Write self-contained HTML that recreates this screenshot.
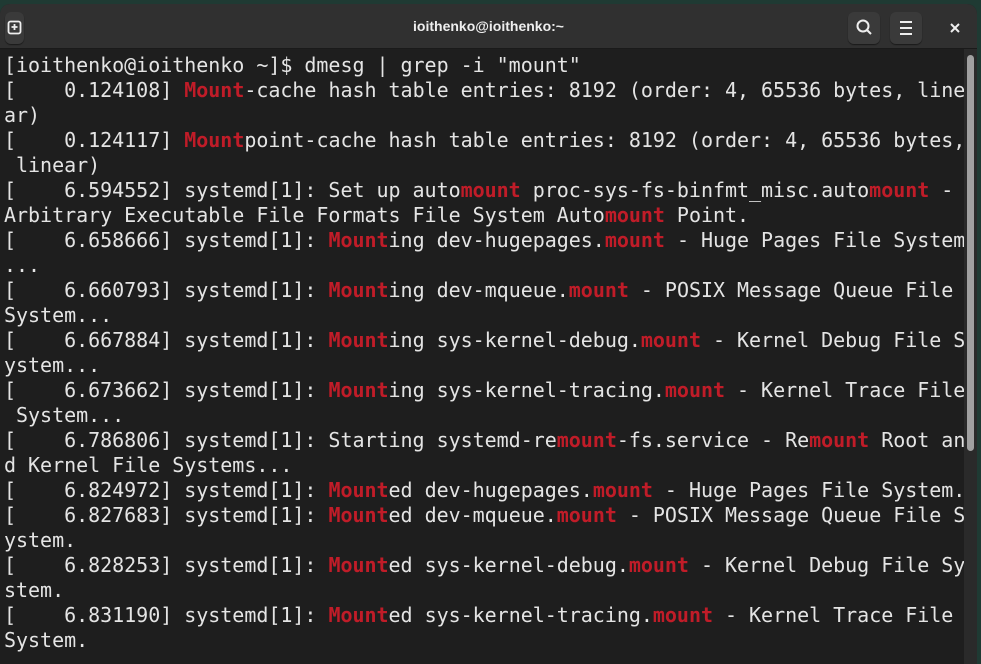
<html><head><style>
body{margin:0;width:981px;height:658px;background:#1f3a33;overflow:hidden;position:relative}
.win{position:absolute;left:0;top:4px;width:977px;height:660px;background:#1e1e1e;border-radius:10px 10px 0 0;overflow:hidden}
.hdr{height:44px;background:#303030;border-bottom:1px solid #1a1a1a;position:relative;font-family:"Liberation Sans",sans-serif}
.title{position:absolute;left:0;right:0;top:14px;text-align:center;color:#eee;font-size:14px;font-weight:bold}
.btn{position:absolute;top:8px;width:32px;height:32px;background:#3a3a3a;border-radius:6px;box-shadow:0 1px 1px #1a1a1a}
pre{position:absolute;left:4px;top:49px;margin:0;font-family:"DejaVu Sans Mono","Liberation Mono",monospace;font-size:20px;letter-spacing:-0.025px;line-height:25px;color:#e4e4e4}
b{color:#c01c28}
.tr{position:absolute;left:964px;top:45px;width:13px;height:620px;background:#2a2a2a}
.th{position:absolute;left:967px;top:51px;width:7px;height:396px;background:#a0a0a0;border-radius:4px}
</style></head><body><div class="win">
<div class="hdr">
<div class="btn" style="left:5px;width:19px"><svg width="19" height="32"><rect x="3.5" y="9.5" width="12" height="12" rx="2" fill="none" stroke="#eee" stroke-width="1.8"/><path d="M9.5 12v6M6.5 15h6" stroke="#eee" stroke-width="1.8"/></svg></div>
<div class="title">ioithenko@ioithenko:~</div>
<div class="btn" style="left:848px"><svg width="32" height="32"><circle cx="15" cy="14" r="5.5" fill="none" stroke="#eee" stroke-width="2"/><path d="M19 18l4 4" stroke="#eee" stroke-width="2"/></svg></div>
<div class="btn" style="left:890px"><svg width="32" height="32"><path d="M10 10h12M10 16h12M10 22h12" stroke="#eee" stroke-width="2"/></svg></div>
<svg style="position:absolute;left:948px;top:17px" width="14" height="14"><path d="M3 3l8 8M11 3l-8 8" stroke="#eee" stroke-width="2"/></svg>
</div>
<pre>[ioithenko@ioithenko ~]$ dmesg | grep -i "mount"
[    0.124108] <b>Mount</b>-cache hash table entries: 8192 (order: 4, 65536 bytes, line
ar)
[    0.124117] <b>Mount</b>point-cache hash table entries: 8192 (order: 4, 65536 bytes,
 linear)
[    6.594552] systemd[1]: Set up auto<b>mount</b> proc-sys-fs-binfmt_misc.auto<b>mount</b> -
Arbitrary Executable File Formats File System Auto<b>mount</b> Point.
[    6.658666] systemd[1]: <b>Mount</b>ing dev-hugepages.<b>mount</b> - Huge Pages File System
...
[    6.660793] systemd[1]: <b>Mount</b>ing dev-mqueue.<b>mount</b> - POSIX Message Queue File
System...
[    6.667884] systemd[1]: <b>Mount</b>ing sys-kernel-debug.<b>mount</b> - Kernel Debug File S
ystem...
[    6.673662] systemd[1]: <b>Mount</b>ing sys-kernel-tracing.<b>mount</b> - Kernel Trace File
 System...
[    6.786806] systemd[1]: Starting systemd-re<b>mount</b>-fs.service - Re<b>mount</b> Root an
d Kernel File Systems...
[    6.824972] systemd[1]: <b>Mount</b>ed dev-hugepages.<b>mount</b> - Huge Pages File System.
[    6.827683] systemd[1]: <b>Mount</b>ed dev-mqueue.<b>mount</b> - POSIX Message Queue File S
ystem.
[    6.828253] systemd[1]: <b>Mount</b>ed sys-kernel-debug.<b>mount</b> - Kernel Debug File Sy
stem.
[    6.831190] systemd[1]: <b>Mount</b>ed sys-kernel-tracing.<b>mount</b> - Kernel Trace File
System.</pre>
<div class="tr"></div><div class="th"></div>
</div></body></html>
